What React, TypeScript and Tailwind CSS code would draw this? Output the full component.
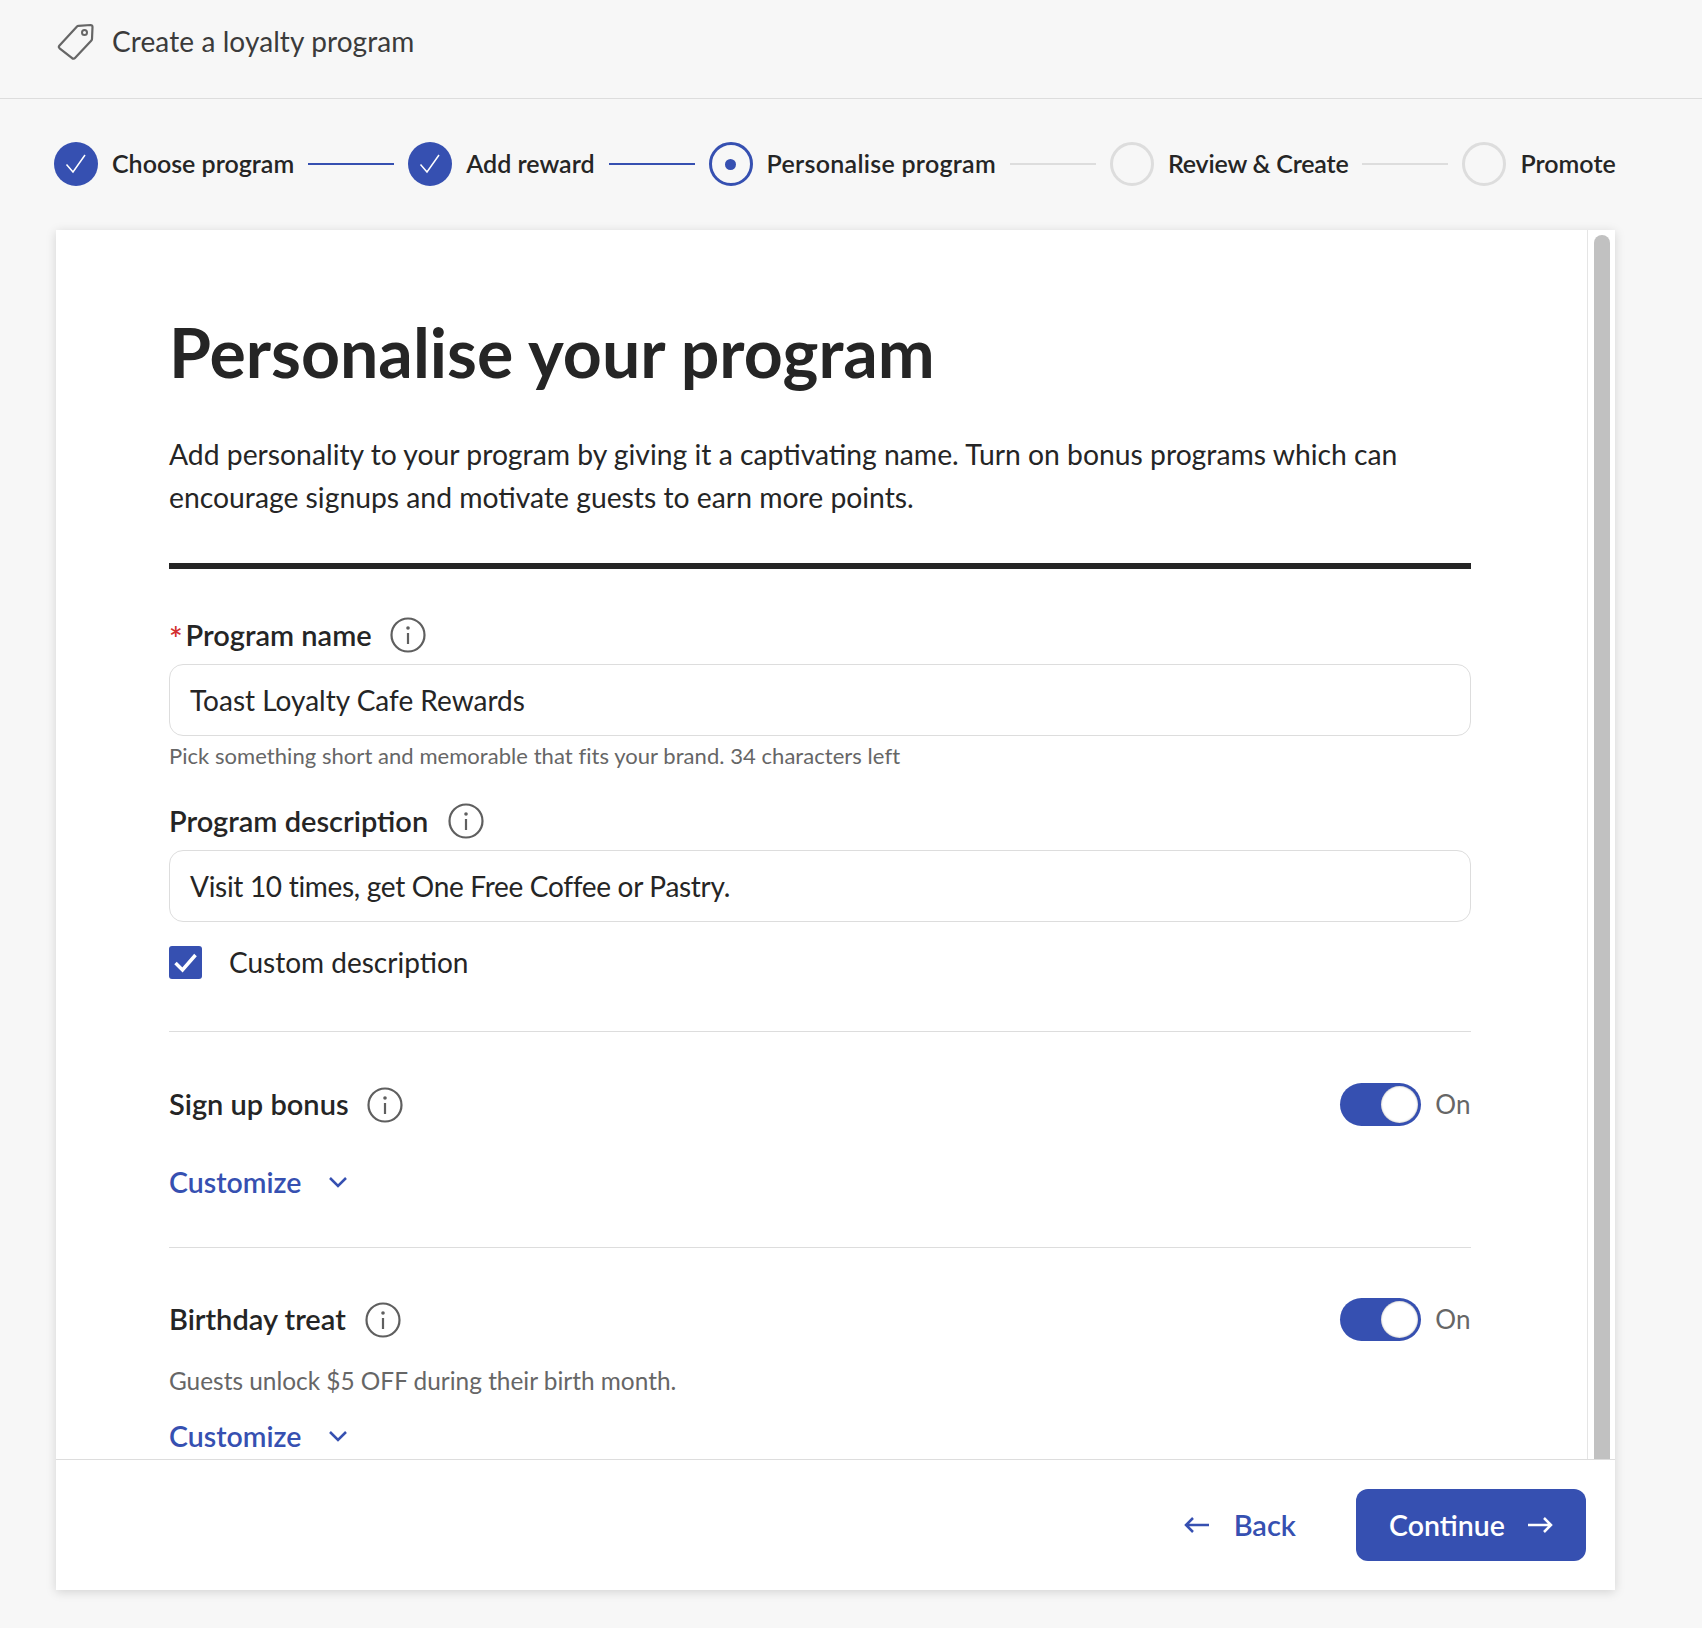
import React from 'react';

const Info = () => (
  <svg width="36" height="36" viewBox="0 0 36 36" fill="none" className="shrink-0 text-[#5f5f5f]">
    <circle cx="18" cy="18" r="16.5" stroke="currentColor" strokeWidth="2.200" />
    <circle cx="18" cy="11" r="1.800" fill="currentColor" />
    <path d="M18 16v11" stroke="currentColor" strokeWidth="2.200" />
  </svg>
);

const Chevron = () => (
  <svg width="22" height="22" viewBox="0 0 22 22" fill="none" className="text-[#3650b1]">
    <path d="M3 7l8 8 8-8" stroke="currentColor" strokeWidth="2.500" />
  </svg>
);

const TagIcon = () => (
  <svg width="38" height="38" viewBox="0 0 38 38" fill="none" className="mt-[2px] text-[#666666]">
    <path
      d="M2.500 22.500 20 3.500a2 2 0 0 1 1.500-.6L33.500 2a2 2 0 0 1 2 2L35 16a2 2 0 0 1-.6 1.400L18 35a2 2 0 0 1-2.900.1L2.600 25.300a2 2 0 0 1-.1-2.800Z"
      stroke="currentColor"
      strokeWidth="2.200"
    />
    <circle cx="27.500" cy="9.500" r="2.500" stroke="currentColor" strokeWidth="2" />
  </svg>
);

type StepState = 'done' | 'active' | 'todo';

const steps: { label: string; state: StepState; tracking: string }[] = [
  { label: 'Choose program', state: 'done', tracking: 'tracking-normal' },
  { label: 'Add reward', state: 'done', tracking: 'tracking-normal' },
  { label: 'Personalise program', state: 'active', tracking: 'tracking-[0.28px]' },
  { label: 'Review & Create', state: 'todo', tracking: 'tracking-[-0.2px]' },
  { label: 'Promote', state: 'todo', tracking: 'tracking-normal' },
];

const StepCircle = ({ state }: { state: StepState }) => {
  if (state === 'done') {
    return (
      <div className="flex h-[44px] w-[44px] shrink-0 items-center justify-center rounded-full bg-[#3650b1]">
        <svg width="24" height="24" viewBox="0 0 24 24" fill="none">
          <path d="M2.500 12.500 9 20 21 3" stroke="white" strokeWidth="1.500" />
        </svg>
      </div>
    );
  }
  if (state === 'active') {
    return (
      <div className="flex h-[44px] w-[44px] shrink-0 items-center justify-center rounded-full border-[3px] border-[#3650b1]">
        <div className="h-[11px] w-[11px] rounded-full bg-[#3650b1]" />
      </div>
    );
  }
  return <div className="h-[44px] w-[44px] shrink-0 rounded-full border-[3px] border-[#dddddd]" />;
};

const Toggle = () => (
  <div className="flex items-center gap-[14px]">
    <div className="flex h-[43px] w-[81px] items-center justify-end rounded-full bg-[#3650b1] pr-[3px]">
      <div className="h-[37px] w-[37px] rounded-full bg-white shadow-[inset_0_0_2px_rgba(0,0,0,0.4)]" />
    </div>
    <span className="text-[26px] tracking-[0.4px] text-[#666666]">On</span>
  </div>
);

const Customize = () => (
  <div className="flex items-center gap-[26px] text-[28.5px] font-semibold leading-[36px] text-[#3650b1]">
    <span>Customize</span>
    <Chevron />
  </div>
);

export default function App() {
  return (
    <div className="flex h-[1628px] flex-col overflow-hidden bg-[#f7f7f7] font-['Lato',sans-serif] text-[#252525]">
      <header className="flex h-[99px] items-center gap-[17px] border-b border-[#dddddd] pb-[16px] pl-[57px]">
        <TagIcon />
        <h2 className="text-[28px] tracking-[0.1px] text-[#3b3b3b]">Create a loyalty program</h2>
      </header>

      <nav className="flex h-[131px] items-center pb-[1px] pl-[54px]">
        {steps.map((step, i) => (
          <React.Fragment key={step.label}>
            <div className="flex items-center gap-[14px]">
              <StepCircle state={step.state} />
              <span className={`text-[25px] font-semibold ${step.tracking}`}>{step.label}</span>
            </div>
            {i < steps.length - 1 && (
              <div
                className={`mx-[14px] h-[2px] w-[86px] ${
                  step.state === 'done' ? 'bg-[#3650b1]' : 'bg-[#dddddd]'
                }`}
              />
            )}
          </React.Fragment>
        ))}
      </nav>

      <main className="ml-[56px] flex h-[1360px] w-[1559px] flex-col bg-white shadow-[0_2px_10px_rgba(0,0,0,0.15)]">
        <div className="flex min-h-0 flex-1">
          <div className="min-w-0 flex-1 overflow-hidden pl-[113px] pr-[116px]">
            <h1 className="mt-[77px] text-[68px] font-bold leading-[90px] text-[#252525]">Personalise your program</h1>
            <p className="mt-[36px] text-[28.3px] leading-[43px]">
              Add personality to your program by giving it a captivating name. Turn on bonus programs which can
              <br />
              encourage signups and motivate guests to earn more points.
            </p>
            <div className="mt-[44px] h-[6px] bg-[#252525]" />

            <label className="mt-[48px] flex h-[36px] items-center text-[29px] font-semibold">
              <span className="mr-[3px] h-[36px] text-[32px] leading-[44px] text-[#d32f2f]">*</span>
              Program name
              <span className="ml-[18px]">
                <Info />
              </span>
            </label>
            <div className="mt-[11px] flex h-[72px] items-center rounded-[14px] border border-[#dddddd] px-[20px] text-[28px]">
              Toast Loyalty Cafe Rewards
            </div>
            <p className="mt-[6px] text-[22px] leading-[28px] tracking-[0.05px] text-[#666666]">
              Pick something short and memorable that fits your brand. 34 characters left
            </p>

            <label className="mt-[33px] flex h-[36px] items-center text-[29px] font-semibold">
              Program description
              <span className="ml-[20px]">
                <Info />
              </span>
            </label>
            <div className="mt-[11px] flex h-[72px] items-center rounded-[14px] border border-[#dddddd] px-[20px] text-[28px] tracking-[-0.3px]">
              Visit 10 times, get One Free Coffee or Pastry.
            </div>

            <div className="mt-[19px] flex items-center gap-[27px]">
              <div className="flex h-[33px] w-[33px] items-center justify-center rounded-[3px] bg-[#3650b1]">
                <svg width="27" height="27" viewBox="0 0 27 27" fill="none">
                  <path d="M3.500 14 10.500 21 23.500 6" stroke="white" strokeWidth="3.500" />
                </svg>
              </div>
              <span className="text-[28px]">Custom description</span>
            </div>

            <div className="mt-[48px] h-[1px] bg-[#dddddd]" />

            <div className="mt-[51px] flex items-center justify-between">
              <div className="flex items-center gap-[18px] text-[29px] font-semibold">
                <span className="-mt-[2px]">Sign up bonus</span>
                <Info />
              </div>
              <Toggle />
            </div>
            <div className="mt-[38px]">
              <Customize />
            </div>

            <div className="mt-[47px] h-[1px] bg-[#dddddd]" />

            <div className="mt-[50px] flex items-center justify-between">
              <div className="flex items-center gap-[19px] text-[29px] font-semibold">
                <span className="-mt-[2px]">Birthday treat</span>
                <Info />
              </div>
              <Toggle />
            </div>
            <p className="mt-[22px] text-[24.4px] leading-[36px] text-[#666666]">
              Guests unlock $5 OFF during their birth month.
            </p>
            <div className="mt-[19px]">
              <Customize />
            </div>
          </div>

          <div className="w-[28px] shrink-0 border-l border-[#e5e5e5] pl-[6px] pr-[5px] pt-[5px]">
            <div className="h-full rounded-t-full bg-[#c1c1c1]" />
          </div>
        </div>

        <footer className="flex h-[131px] shrink-0 items-center justify-end gap-[60px] border-t border-[#dddddd] pr-[29px]">
          <button className="flex items-center gap-[24px] text-[29px] font-semibold text-[#3650b1]">
            <svg width="26" height="18" viewBox="0 0 26 18" fill="none">
              <path d="M25 9H2M9 2 2 9l7 7" stroke="currentColor" strokeWidth="2.500" />
            </svg>
            Back
          </button>
          <button className="flex h-[72px] w-[230px] items-center justify-center gap-[22px] rounded-[12px] bg-[#3650b1] text-[28.5px] font-semibold text-white">
            Continue
            <svg width="26" height="18" viewBox="0 0 26 18" fill="none">
              <path d="M1 9h23M17 2l7 7-7 7" stroke="currentColor" strokeWidth="2.500" />
            </svg>
          </button>
        </footer>
      </main>
    </div>
  );
}
